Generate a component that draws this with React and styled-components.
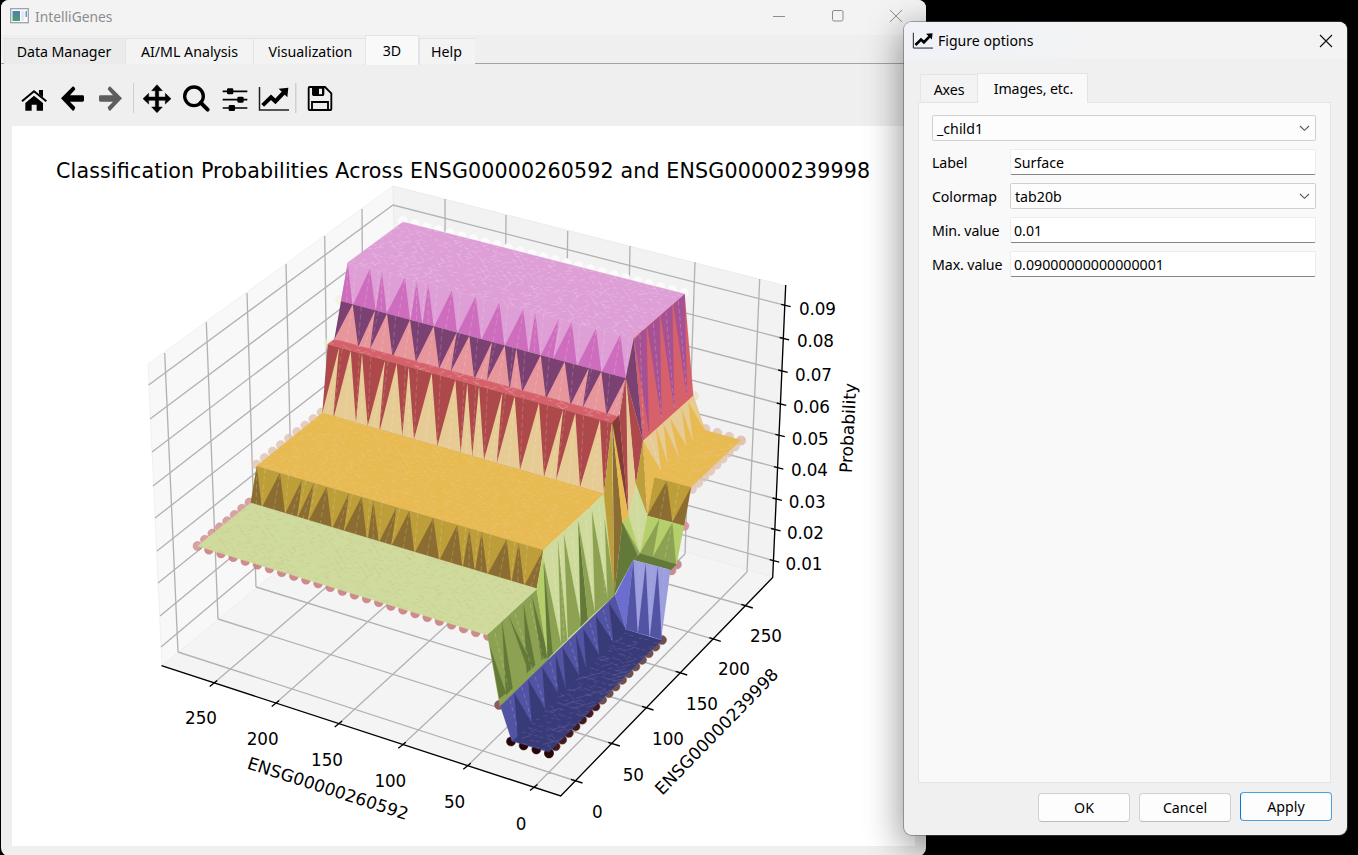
import React from "react";
import styled, { createGlobalStyle } from "styled-components";

const Global = createGlobalStyle`
  * { box-sizing: border-box; }
  body { margin: 0; background: #000; overflow: hidden;
    font-family: "Noto Sans", "Open Sans", sans-serif; font-size: 14.2px; color: #000; }
`;

const Desktop = styled.div`position: relative; width: 1358px; height: 855px; background: #000; overflow: hidden;`;

const MainWindow = styled.div`
  position: absolute; left: 1px; top: 0; width: 925px; height: 856px;
  border-radius: 8px; background: #efefef; overflow: hidden; display: flex; flex-direction: column;
`;
const TitleBar = styled.div`
  height: 35px; flex: none; background: #f3f3f3; display: flex; align-items: center;
  padding: 0 24px 3px 9px; color: #8c8c8c; gap: 6px;
`;
const TitleText = styled.span`flex: 1; font-size: ${(p) => p.$size || 13.8}px;`;
const WinControls = styled.div`display: flex; gap: 46.5px; align-items: center;`;

const TabBar = styled.div`
  height: 30px; flex: none; display: flex; align-items: flex-end; padding-left: 3px;
  background: linear-gradient(#a3a3a3, #a3a3a3) 0 28px / 100% 1px no-repeat;
`;
const Tab = styled.div`
  width: ${(p) => p.$w}px; height: ${(p) => (p.$active ? 30 : 26)}px; margin-bottom: ${(p) => (p.$active ? 0 : 1)}px;
  background: ${(p) => (p.$active ? "#f9f9f9" : p.$dim ? "#ebebeb" : "#f3f3f3")};
  border: 1px solid #e4e4e4; border-bottom: 0; ${(p) => !p.$active && "border-right-width: 0;"}
  display: flex; align-items: center; justify-content: center; white-space: nowrap;
  letter-spacing: ${(p) => p.$ls || 0}px; padding-right: ${(p) => p.$pr || 0}px; padding-left: ${(p) => p.$pl || 0}px;
`;
const Toolbar = styled.div`height: 61px; flex: none; display: flex; align-items: center; padding: 7px 0 0 13.5px;`;
const Tool = styled.div`width: 39px; height: 30px; display: flex; align-items: center; justify-content: center;`;
const Separator = styled.div`
  width: ${(p) => p.$w || 6}px; height: 30px; margin-top: -2px;
  background: linear-gradient(#cfcfcf, #cfcfcf) 1px 0 / ${(p) => p.$line || 1}px 100% no-repeat;
`;
const Canvas = styled.div`margin: 0 11px 0 11px; height: 720px; background: #fff; flex: none;`;

const Dialog = styled.div`
  position: absolute; left: 904px; top: 22px; width: 443px; height: 813px; border-radius: 8px;
  background: #f0f0f0; box-shadow: 0 0 0 1px rgba(90,90,90,.5), 0 10px 36px 3px rgba(0,0,0,.42);
  overflow: visible; display: flex; flex-direction: column;
`;
const DialogTitle = styled.div`
  height: 37px; flex: none; display: flex; align-items: center; gap: 5px; padding: 0 15px 0 9px;
  border-radius: 8px 8px 0 0; background: linear-gradient(90deg, #f0f2f8, #f3f3f3 50%);
`;
const DialogTabs = styled.div`display: flex; align-items: flex-end; height: 43px; padding-left: 16px;`;
const DialogTab = styled.div`
  width: ${(p) => p.$w}px; height: ${(p) => (p.$active ? 30 : 27)}px; margin-bottom: ${(p) => (p.$active ? -1 : 1)}px;
  position: relative; background: ${(p) => (p.$active ? "#f9f9f9" : "#f3f3f3")};
  border: 1px solid #e4e4e4; border-bottom: 0; ${(p) => !p.$active && "border-right: 0;"}
  display: flex; align-items: center; justify-content: center; letter-spacing: -0.1px;
  padding-left: ${(p) => (p.$active ? 2 : 0)}px; padding-top: ${(p) => (p.$active ? 0 : 2)}px;
`;
const Panel = styled.div`
  margin: 0 16px 0 14px; height: 681px; background: #f9f9f9; border: 1px solid #e4e4e4;
  padding: 12px 14px 0 13px; display: flex; flex-direction: column; gap: 8px; width: 413px;
`;
const Row = styled.div`display: flex; height: 26px;`;
const RowLabel = styled.div`width: 78px; line-height: 27px; white-space: nowrap; letter-spacing: -0.1px;`;
const Field = styled.div`
  width: 306px; height: 26px; background: #fff; border: 1px solid #ececec; border-bottom-color: #868686;
  border-radius: 2px; line-height: 26px; padding-left: 3px;
`;
const Select = styled.div`
  width: ${(p) => p.$w}px; height: 26px; background: #fdfdfd; border: 1px solid #d0d0d0; border-radius: 2px;
  display: flex; align-items: center; justify-content: space-between; padding: ${(p) => p.$pt || 0}px 5px 0 4px;
`;
const Buttons = styled.div`display: flex; justify-content: flex-end; gap: 9px; padding: 9px 15px 0 0;`;
const Button = styled.div`
  width: 92px; height: 29px; border-radius: 4px; background: #fdfdfd; margin-top: 1px;
  border: 1px solid #d0d0d0; border-bottom-color: #bcbcbc; padding-bottom: 1px;
  ${(p) => p.$primary && "border: 1.5px solid #4d9fdd; border-left-color: #0078d4; margin-top: 0; height: 29px; padding-bottom: 0;"}
  display: flex; align-items: center; justify-content: center;
`;
const Glyph = styled.svg`display: block; overflow: visible; flex: none;`;
const PlotSvg = styled.svg`
  display: block;
  text { font-family: "DejaVu Sans", sans-serif; font-size: 16.8px; fill: #000; }
  .axis { font-size: 17.1px; }
  .title { font-size: 20.6px; }
`;

/* ---------- icons ---------- */
const ToolIcon = ({ cx, children, color = "#000" }) => (
  <Tool><Glyph width="28" height="28" viewBox={`${cx - 42} 255 84 84`} fill={color} stroke="none">{children}</Glyph></Tool>
);
const ARROW = "M183 295 L219 259 Q224 261 226 268 L210 286 H248 Q252 286 252 290 V301 Q252 305 248 305 H210 L226 322 Q224 331 219 333 Z";
const ChartGlyph = () => (
  <>
    <path d="M778.500 261 V330 H867" fill="none" stroke="#222" strokeWidth="4.500" />
    <path d="M788 316 L813 292 L826 304 L853 276" fill="none" stroke="#000" strokeWidth="12" />
    <path d="M836 266 L865 263 L862 292 Z" />
  </>
);
const Chevron = () => (
  <Glyph width="11" height="7" viewBox="0 0 11 7"><path d="M1 1 L5.500 5.300 L10 1" fill="none" stroke="#555" strokeWidth="1.100" /></Glyph>
);
const Cross = ({ color, size, w = 1 }) => (
  <Glyph width={size} height={size} viewBox="0 0 12 12"><path d="M0 0 L12 12 M12 0 L0 12" stroke={color} strokeWidth={w} fill="none" /></Glyph>
);

/* ---------- plot data ---------- */
const pts = (a) => a.map((p) => p.join(",")).join(" ");
const P = ({ c, d }) => <polygon points={d} fill={c} stroke={c} strokeWidth=".4" />;
const lerp = (a, b, t) => [a[0] + (b[0] - a[0]) * t, a[1] + (b[1] - a[1]) * t];
const yOn = (a, b, x) => a[1] + ((x - a[0]) / (b[0] - a[0])) * (b[1] - a[1]);

/* A cliff face: a quad with upward-pointing triangles of a second shade. */
const Face = ({ top, bot, base, tri, color, seam = "#fff" }) => (
  <g>
    <polygon points={pts([top[0], top[1], bot[1], bot[0]])} fill={base} />
    {tri.map(([x, l, r], i) => (
      <polygon key={i} fill={color} points={pts([[x, yOn(...top, x)], [l, yOn(...bot, l)], [r, yOn(...bot, r)]])} />
    ))}
    {tri.map(([x, l, r], i) => (
      <path key={i} fill="none" stroke={seam} strokeOpacity=".26" strokeWidth=".7" strokeDasharray="5 3"
        d={`M${x} ${yOn(...top, x) + 2} L${(l + r) / 2} ${yOn(...bot, (l + r) / 2)} M${(x + r) / 2 + 6} ${yOn(...top, (x + r) / 2 + 6)} L${r} ${yOn(...bot, r)}`} />
    ))}
  </g>
);

/* Repeatable scatter value in 0..1 for a cell. */
const noise = (i, j) => {
  const s = Math.sin(i * 12.9898 + j * 78.233) * 43758.5453;
  return s - Math.floor(s);
};

/* A flat plateau with faint triangulation seams. Corners: a-b back edge, d-c front edge. */
const Plateau = ({ a, b, c, d, fill, nx, ny, seam = "#fff", o = 0.3 }) => {
  const at = (u, v) => lerp(lerp(a, b, u), lerp(d, c, u), v);
  let rows = "", diag = "";
  for (let j = 0; j < ny; j++) {
    for (let i = 0; i < nx; i++) {
      const n = noise(i, j);
      const p = at((i + n * 0.4) / nx, (j + 0.2 + noise(j, i) * 0.6) / ny);
      if (n < 0.72) rows += `M${p[0].toFixed(1)} ${p[1].toFixed(1)} l4 ${(n * 2.4 - 0.5).toFixed(2)}`;
      const m = noise(i + 40, j + 9);
      if (m < 0.42 && i < nx - 1) {
        const s = at(i / nx, j / ny);
        const q = at((i + (m < 0.2 ? 1 : -0.3)) / nx, (j + 1) / ny);
        if (i > 0) diag += `M${s[0].toFixed(1)} ${s[1].toFixed(1)} L${q[0].toFixed(1)} ${q[1].toFixed(1)}`;
      }
    }
  }
  return (
    <g fill="none" stroke={seam}>
      <polygon points={pts([a, b, c, d])} fill={fill} stroke={fill} strokeWidth=".5" />
      <path d={rows} strokeOpacity={o} strokeWidth=".7" />
      <path d={diag} strokeOpacity={o + 0.05} strokeWidth=".6" />
    </g>
  );
};

const Dots = ({ from, to, n, c, c2, o = 1, r = 4.5 }) => (
  <g fill={c} fillOpacity={o}>
    {Array.from({ length: n }, (_, i) => {
      const p = lerp(from, to, n > 1 ? i / (n - 1) : 0);
      return <circle key={i} cx={p[0]} cy={p[1]} r={r} fill={c2 && i > n / 2 ? c2 : c} stroke={c} strokeOpacity=".8" strokeWidth=".6" />;
    })}
  </g>
);

const GRID = [
  [164.7, 353, 178, 652], [206.3, 322, 218, 619], [247, 293, 256, 587], [286, 264, 293, 557], [324.7, 236, 329, 527], [362, 209, 364, 499],
  [445, 199, 446, 485], [506, 215, 504, 501], [567.7, 231, 564, 518], [630, 246, 624, 538], [695, 262, 685, 554], [759.7, 279, 747, 572],
  [534, 787.3, 747, 572], [467.3, 766, 685, 554], [402.3, 745, 624, 538], [338.7, 723.7, 564, 518], [275.7, 703.3, 504, 501], [213.7, 683.3, 446, 485],
  [576, 781, 178, 652], [613.3, 744, 218, 619], [647, 708, 256, 587], [680.7, 673, 293, 557], [714.3, 639.3, 329, 527], [746.3, 606, 364, 499],
];
const Z_LINES = [
  [385, 148.6, 205, 305.3, 309, 818], [419, 150, 237, 338.5, 341.5, 816], [452, 152, 269, 371, 375, 814], [486, 153, 300, 404, 407, 812],
  [518, 155, 333, 435.3, 439, 810.7], [551, 157, 364, 467.7, 470.7, 810], [583, 158, 394, 499, 502, 807.7], [616, 160, 424, 529.5, 533, 806], [647, 161, 452, 560.7, 564, 804.5],
];
const X_TICKS = [[213.7, 683.3, 201, 718, 250], [275.7, 703.3, 262.7, 739, 200], [338.7, 723.7, 327, 760, 150], [402.3, 745, 390.3, 781, 100], [467.3, 766, 454.7, 802, 50], [534, 787.3, 521, 824, 0]];
const Y_TICKS = [[576, 781, 597.3, 812, 0], [613.3, 744, 633.3, 775, 50], [647, 708, 668, 739, 100], [680.7, 673, 702, 704, 150], [714.3, 639.3, 734, 669, 200], [746.3, 606, 766, 636, 250]];

const PINK_T = [[347.7, 262.7], [633.3, 338.3]], PINK_B = [[341, 301], [625.7, 378]];
const SALM_B = [[334.3, 339.3], [618.3, 416.7]];
const RED_T = [[327.7, 344.3], [611.8, 423]], RED_B = [[322.3, 413], [604, 494]];
const OLIVE_T = [[256.7, 466], [543.3, 550]], OLIVE_B = [[250.7, 503], [536.7, 588.7]];

const Axes = () => (
  <g fill="none">
    <polygon points="148,364 393,186 401,469 162,666" fill="#f8f8f8" stroke="#f0f0f0" />
    <polygon points="393,186 786,286 773,577 401,469" fill="#f2f2f2" stroke="#ebebeb" />
    <polygon points="162,666 401,469 773,577 561,796" fill="#f4f4f4" stroke="#eee" />
    <path stroke="#b2b2b2" strokeWidth="1.330" d={GRID.map((g) => `M${g[0]} ${g[1]}L${g[2]} ${g[3]}`).join("")} />
    <path stroke="#b2b2b2" strokeWidth="1.330" d={Z_LINES.map((z) => `M${z[1]} ${z[0]}L393 ${z[2]}L${786 - (z[3] - 286) * 0.0447} ${z[3]}`).join("")} />
    <path stroke="#000" strokeWidth="1.330" d="M161.500 665.700 L560.700 796 L772.700 577.500 L785.700 285" />
    <path stroke="#000" strokeWidth="1.330" d={
      X_TICKS.map((t) => `M${t[0] - 4} ${t[1] + 3.2}l7.500 -6`).join("") +
      Y_TICKS.map((t) => `M${t[0] - 5} ${t[1] - 1.7}l11.500 3.700`).join("") +
      Z_LINES.map((z) => `M${786 - (z[3] - 286) * 0.0447 - 4} ${z[3] - 1}l9.500 2.400`).join("")} />
  </g>
);

const Labels = () => (
  <g textAnchor="middle">
    {X_TICKS.concat(Y_TICKS).map((t, i) => <text key={i} x={t[2]} y={t[3] + 5.6} textLength={String(t[4]).length * 10.6}>{t[4]}</text>)}
    {Z_LINES.map((z, i) => <text key={i} x={z[5] - 0.5} y={z[4] + 5.6} textLength="37">{`0.0${9 - i}`}</text>)}
    <text className="axis" transform="translate(328 788.500) rotate(18)" y="6" textLength="168">ENSG00000260592</text>
    <text className="axis" transform="translate(716.500 731.500) rotate(-45.800)" y="6" textLength="168">ENSG00000239998</text>
    <text className="axis" transform="translate(849 428) rotate(-87)" y="5" textLength="90">Probability</text>
    <text className="title" x="463" y="177.500" textLength="814">Classification Probabilities Across ENSG00000260592 and ENSG00000239998</text>
  </g>
);

const Surface = () => (
  <g>
    <Dots from={[197.500, 546]} to={[249.500, 502.500]} n={8} c="#cb8585" o={0.75} />
    <Dots from={[209, 549.700]} to={[488, 636]} n={24} c="#c98080" o={0.9} />
    <Dots from={[256.500, 464.500]} to={[321.500, 412.500]} n={9} c="#dfc3b3" o={0.8} />
    <Dots from={[328, 343.500]} to={[340, 300]} n={2} c="#f0f2d8" o={0.7} />
    <Dots from={[403, 221]} to={[684, 293]} n={25} c="#fbfbfb" />
    <Dots from={[705.500, 429]} to={[741, 440.500]} n={4} c="#dfc0b0" o={0.8} />
    <Dots from={[741, 440.500]} to={[692, 489]} n={9} c="#dfc0b0" o={0.8} />
    <Dots from={[694, 396]} to={[694, 396]} n={1} c="#ece0c6" o={0.8} />
    <Dots from={[684.500, 526]} to={[684.500, 526]} n={1} c="#d79a9c" />
    <Dots from={[677, 564.500]} to={[671.500, 570.500]} n={2} c="#c48e90" />
    <Dots from={[662, 640]} to={[549, 753]} n={18} c="#6f5050" c2="#401a1c" />
    <Dots from={[511, 741.500]} to={[549, 753.500]} n={4} c="#280608" />
    <Dots from={[499, 705]} to={[499, 705]} n={1} c="#8b5a5e" />

    <Plateau a={[403, 222]} b={[684.700, 294]} c={PINK_T[1]} d={PINK_T[0]} fill="#de9ed6" nx={36} ny={13} o={0.28} />
    <Face top={PINK_T} bot={PINK_B} base="#de9ed6" color="#ce6dbd" tri={[
      [347.7, 341, 352.3], [370, 353.3, 375.7], [382, 375.7, 386.7], [405, 386.7, 410], [416.7, 410.7, 422], [428.3, 422.7, 433.7],
      [452, 434.3, 457], [475.7, 457.7, 481], [499.3, 481.7, 504.3], [523.3, 505, 528.3], [535.3, 529, 540], [559, 541, 553.3],
      [571.7, 553.3, 576.7], [596, 577.7, 601.3], [620.3, 602, 625.7]]} />
    <Face top={PINK_B} bot={SALM_B} base="#7b4173" color="#e7969c" tri={[
      [352.7, 334.3, 358], [375, 358.7, 370], [387, 370, 392.3], [410, 393.3, 415.7], [433.7, 416, 439], [456.7, 439.3, 450.7], [469.3, 451, 474],
      [492, 475, 486.7], [504.7, 486.7, 509.3], [516.3, 510, 522], [540.7, 522.7, 545.7], [564.7, 546.7, 570.3], [588.7, 571, 582.7],
      [601.3, 583, 606.3], [625.7, 607.3, 618.3]]} />
    <Plateau a={SALM_B[0]} b={SALM_B[1]} c={RED_T[1]} d={RED_T[0]} fill="#d6616b" nx={24} ny={2} o={0.28} />
    <Face top={RED_T} bot={RED_B} base="#ad494a" color="#e7cb94" tri={[
      [339, 322.3, 333.3], [350.7, 334, 356], [362, 356, 367.7], [385, 367.7, 379.3], [396.7, 380, 402.3], [408.7, 402.3, 414], [431.7, 414, 437.3],
      [455.3, 437.3, 460.7], [467.3, 460.7, 472.3], [479, 472.3, 484], [502.3, 484, 496.7], [514.7, 496.7, 520], [539, 520, 544],
      [563, 544, 556], [575.3, 556, 580], [600, 580, 604]]} />
    <Plateau a={RED_B[0]} b={RED_B[1]} c={OLIVE_T[1]} d={OLIVE_T[0]} fill="#e7ba52" nx={36} ny={16} seam="#f3d09c" o={0.4} />
    <Face top={OLIVE_T} bot={OLIVE_B} base="#bd9e39" color="#8c6d31" tri={[
      [256.7, 250.7, 261.7], [280, 262.3, 285], [302.3, 285.3, 297.3], [314, 297.7, 308], [326.7, 308.7, 331.7], [349, 332.7, 344], [361.7, 344, 366.7],
      [373.3, 368, 378.7], [396.7, 379.3, 391.3], [409.3, 391.7, 414.3], [433.3, 415, 439], [457.3, 439.7, 462.3], [469.3, 463, 474.7],
      [481.7, 475, 487.3], [506.7, 487.7, 511], [518.7, 511.7, 524], [543.3, 524.7, 536.7]]} />
    <Plateau a={OLIVE_B[0]} b={OLIVE_B[1]} c={[487.500, 635]} d={[197.700, 546]} fill="#cedb9c" nx={34} ny={12} seam="#d3ae86" o={0.4} />

    {/* green cliffs, in thirds of a pixel */}
    <g transform="translate(480 460) scale(.33333)">
      <P c="#8ca252" d="22,525 170,388 205,595 205,600 60,740" />
      <P c="#637939" d="30,560 58,716 78,700" />
      <P c="#637939" d="66,485 78,705 98,685" />
      <P c="#637939" d="87,470 142,625 160,625" />
      <P c="#637939" d="131,435 140,640 166,615" />
      <P c="#637939" d="156,410 185,600 206,590" />
      <P c="#cedb9c" d="190,270 373,103 405,405 205,598" />
      <P c="#b5cf6b" d="190,275 170,388 202,592" />
      <P c="#8ca252" d="192,305 203,597 244,556" />
      <P c="#637939" d="191,310 203,597 218,580" />
      <P c="#8ca252" d="234,245 243,556 262,540" />
      <P c="#8ca252" d="252,225 264,535 304,498" />
      <P c="#637939" d="295,185 302,500 324,478" />
      <P c="#8ca252" d="296,190 324,478 345,458" />
      <P c="#8ca252" d="336,155 345,458 385,422" />
      <P c="#8ca252" d="374,180 383,425 405,405" />
      <g stroke="#fff" strokeOpacity=".3" strokeWidth="2" strokeDasharray="14 9" fill="none">
        <path d="M45 520 L85 680 M105 460 L160 640 M215 265 L240 500 M275 215 L300 460 M318 180 L340 430 M358 140 L375 400 M150 430 L190 600 M240 260 L252 540" />
      </g>
    </g>

    {/* right-hand ridge, in thirds of a pixel */}
    <g transform="translate(585 285) scale(.33333)">
      <P c="#d6616b" d="146,160 299,28 325,332 174,468" />
      <P c="#a55194" d="148,164 184,128 192,440" />
      <P c="#a55194" d="187,126 224,93 230,405" />
      <P c="#a55194" d="227,91 262,60 268,375" />
      <P c="#a55194" d="265,58 299,28 306,336" />
      <P c="#a55194" d="166,143 174,136 192,440" />
      <P c="#7b4173" d="146,160 122,280 174,468" />
      <P c="#ad494a" d="122,280 174,468 152,600" />
      <P c="#843c39" d="80,415 103,390 131,695" />
      <P c="#ad494a" d="122,280 103,392 131,690" />
      <P c="#e7cb94" d="124,286 152,600 130,698" />
      <P c="#bd9e39" d="80,415 57,630 88,930" />
      <P c="#8c6d31" d="82,415 112,712 88,928" />
      <P c="#e7ba52" d="82,415 131,695 112,714" />
      <P c="#e7ba52" d="174,468 325,332 360,435 468,465 318,607 208,577 187,692" />
      <P c="#e7cb94" d="174,468 213,434 228,555" />
      <P c="#e7cb94" d="215,432 235,414 248,535" />
      <P c="#e7cb94" d="235,414 254,397 282,518" />
      <P c="#e7cb94" d="254,397 289,366 304,482" />
      <P c="#e7cb94" d="289,366 309,348 324,470" />
      <P c="#e7cb94" d="309,348 325,332 358,434" />
      <P c="#bd9e39" d="174,468 152,600 187,692" />
      <P c="#cedb9c" d="152,595 187,692 165,805 131,697" />
      <P c="#b5cf6b" d="131,695 112,714 165,805" />
      <P c="#8ca252" d="112,712 165,805 155,812" />
      <P c="#637939" d="112,712 158,812 145,825 88,930" />
      <P c="#bd9e39" d="208,577 318,607 297,722 187,692" />
      <P c="#8c6d31" d="245,588 187,692 262,712" />
      <P c="#8c6d31" d="318,607 297,722 262,712" />
      <P c="#b5cf6b" d="187,692 297,722 275,838 165,805" />
      <P c="#8ca252" d="223,703 165,805 203,817" />
      <P c="#8ca252" d="262,712 203,817 273,837" />
      <P c="#637939" d="165,805 275,838 258,855 145,825" />
      <g stroke="#fff" strokeOpacity=".3" strokeWidth="2" strokeDasharray="14 9" fill="none">
        <path d="M165 150 L175 430 M205 115 L230 400 M243 80 L268 370 M280 48 L306 330 M195 455 L225 550 M245 590 L225 700 M262 712 L238 825 M282 600 L262 712 M152 610 L165 780 M175 500 L187 690" />
      </g>
    </g>
    <Plateau a={[655, 470]} b={[700, 430]} c={[739, 441]} d={[692, 486]} fill="none" nx={8} ny={8} seam="#f3d09c" o={0.4} />

    {/* blue valley, in thirds of a pixel */}
    <Plateau a={[512, 741]} b={[625.500, 629]} c={[661.500, 640]} d={[549, 752]} fill="#393b79" nx={26} ny={7} seam="#9a9cd0" o={0.3} />
    <g transform="translate(470 580) scale(.33333)">
      <P c="#5254a3" d="91,378 435,45 468,148 126,485" />
      {[[133, 340, 143, 185], [175, 300, 185, 226], [217, 262, 226, 268], [257, 225, 264, 288], [278, 203, 288, 328], [318, 165, 328, 349], [340, 146, 349, 389], [378, 108, 388, 430], [417, 70, 430, 468]].map(([x, y, l, r]) => (
        <P key={x} c="#393b79" d={`${x},${y} ${l},${470 - (l - 143) * 0.985} ${r},${470 - (r - 143) * 0.985}`} />
      ))}
      <P c="#9c9ede" d="490,-60 601,-30 573,180 467,148" />
      <P c="#6b6ecf" d="490,-60 435,46 467,148" />
      <P c="#5254a3" d="490,-58 467,148 503,158" />
      <P c="#5254a3" d="527,-48 504,158 538,168" />
      <P c="#5254a3" d="563,-38 540,168 575,180" />
      <path stroke="#b9baf0" strokeOpacity=".45" strokeWidth="2" strokeDasharray="13 9" fill="none"
        d="M120 360 L142 445 M155 320 L182 410 M195 290 L222 365 M240 245 L265 330 M300 185 L325 265 M360 130 L385 215 M400 90 L425 180 M508 -50 L503 150 M545 -40 L538 160 M582 -30 L573 170" />
    </g>
  </g>
);

export default function App() {
  return (
    <Desktop>
      <Global />
      <MainWindow>
        <TitleBar>
          <Glyph width="19" height="16" viewBox="0 0 19 16">
            <defs><linearGradient id="scr" x2="0" y2="1"><stop stopColor="#4b7fae" /><stop offset="1" stopColor="#4f9f6c" /></linearGradient></defs>
            <rect x=".7" y=".7" width="17.600" height="14" fill="#fff" stroke="#9aa2aa" strokeWidth="1.300" />
            <rect x="2.500" y="3" width="7.500" height="10" fill="url(#scr)" />
            <rect x="11" y="3" width="3.500" height="10" fill="#e6eaf0" /><rect x="15.500" y="3" width="1.500" height="6" fill="#6d9bb5" />
          </Glyph>
          <TitleText>IntelliGenes</TitleText>
          <WinControls>
            <Glyph width="12" height="12"><path d="M0 6.500 H12" stroke="#8c8c8c" /></Glyph>
            <Glyph width="12" height="12"><rect x=".5" y=".5" width="10.500" height="10.500" rx="1.500" fill="none" stroke="#8c8c8c" /></Glyph>
            <Cross color="#8c8c8c" size={12} />
          </WinControls>
        </TitleBar>
        <TabBar>
          <Tab $w={121} $dim $pr={2} $ls={-0.05}>Data Manager</Tab>
          <Tab $w={128}>AI/ML Analysis</Tab>
          <Tab $w={112} $pl={2}>Visualization</Tab>
          <Tab $w={54} $active>3D</Tab>
          <Tab $w={56} $pr={2}>Help</Tab>
        </TabBar>
        <Toolbar>
          <ToolIcon cx={102}>
            <path d="M66 304 L102 274 L139 304" fill="none" stroke="#000" strokeWidth="6" />
            <path d="M117 270 H129 V292 L117 283 Z M76 309 L102 287 L129 309 V332 H110 V314 H95 V332 H76 Z" />
          </ToolIcon>
          <ToolIcon cx={219}><path d={ARROW} /></ToolIcon>
          <ToolIcon cx={336} color="#5d5d5d"><path d={ARROW} transform="translate(549 0) scale(-1 1)" /></ToolIcon>
          <Separator />
          <ToolIcon cx={471}>
            <path d="M471 254 L487 272 H476 V291 H496 V280 L513 296 L496 312 V301 H476 V321 H487 L471 338 L455 321 H466 V301 H446 V312 L429 296 L446 280 V291 H466 V272 H455 Z" stroke="#000" strokeWidth="1.500" />
          </ToolIcon>
          <ToolIcon cx={588}>
            <circle cx="582" cy="289" r="28" fill="none" stroke="#000" strokeWidth="10" />
            <path d="M602 308 L623 329" stroke="#000" strokeWidth="12" strokeLinecap="round" />
          </ToolIcon>
          <ToolIcon cx={705}>
            <path d="M668 274 H742 M668 299 H742 M668 324 H742" stroke="#000" strokeWidth="5" fill="none" />
            <rect x="681" y="265" width="19" height="18" rx="4" /><rect x="712" y="290" width="19" height="18" rx="4" /><rect x="686" y="315" width="19" height="18" rx="4" />
          </ToolIcon>
          <ToolIcon cx={822}><ChartGlyph /></ToolIcon>
          <Separator $w={6.5} $line={1.5} />
          <ToolIcon cx={960}>
            <path d="M926 264 Q926 261 929 261 H975 L994 280 V327 Q994 330 991 330 H929 Q926 330 926 327 Z M936 330 V306 H984 V330" fill="none" stroke="#000" strokeWidth="5.500" />
            <path d="M936 261 H973 V283 Q973 288 968 288 H941 Q936 288 936 283 Z M957 266 V283 H966 V266 Z" fillRule="evenodd" />
          </ToolIcon>
        </Toolbar>
        <Canvas>
          <PlotSvg width="903" height="720" viewBox="12 126 903 720">
            <Axes />
            <Surface />
            <Labels />
          </PlotSvg>
        </Canvas>
      </MainWindow>

      <Dialog>
        <DialogTitle>
          <Glyph width="20" height="17" viewBox="777 258 90 76"><ChartGlyph /></Glyph>
          <TitleText $size={14.1}>Figure options</TitleText>
          <Cross color="#111" size={12} w={1.2} />
        </DialogTitle>
        <DialogTabs>
          <DialogTab $w={57}>Axes</DialogTab>
          <DialogTab $w={111} $active>Images, etc.</DialogTab>
        </DialogTabs>
        <Panel>
          <Row><Select $w={385} $pt={1}>_child1<Chevron /></Select></Row>
          <Row><RowLabel>Label</RowLabel><Field>Surface</Field></Row>
          <Row><RowLabel>Colormap</RowLabel><Select $w={306} $pt={1}>tab20b<Chevron /></Select></Row>
          <Row><RowLabel>Min. value</RowLabel><Field>0.01</Field></Row>
          <Row><RowLabel>Max. value</RowLabel><Field>0.09000000000000001</Field></Row>
        </Panel>
        <Buttons>
          <Button>OK</Button>
          <Button>Cancel</Button>
          <Button $primary>Apply</Button>
        </Buttons>
      </Dialog>
    </Desktop>
  );
}
